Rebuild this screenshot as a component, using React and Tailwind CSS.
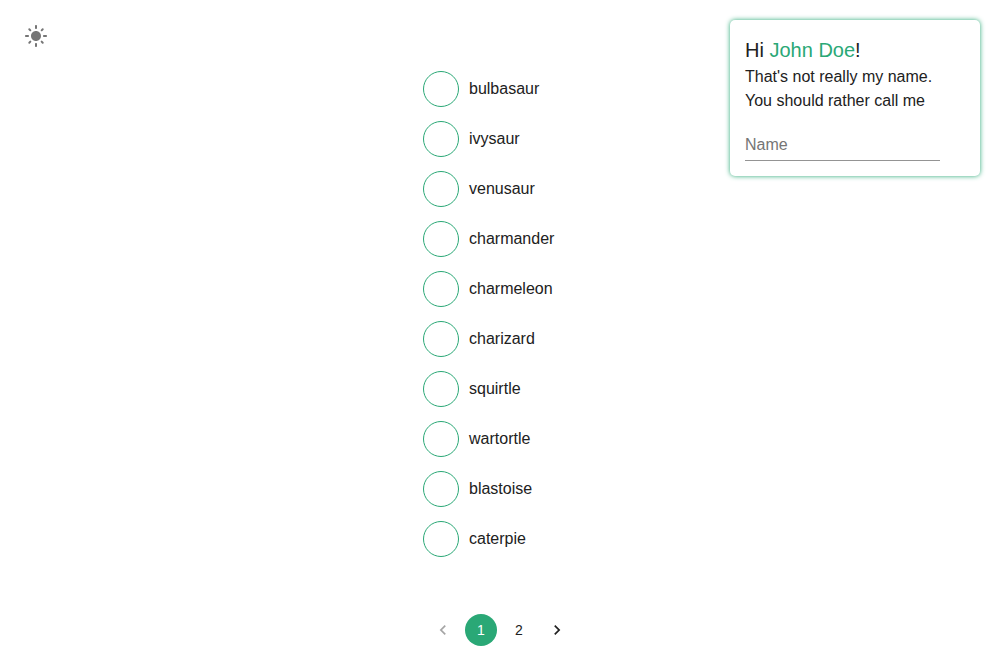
import { useState } from "react";
import { MdLightMode, MdNavigateBefore, MdNavigateNext } from "react-icons/md";

const pokemon = [
  "bulbasaur",
  "ivysaur",
  "venusaur",
  "charmander",
  "charmeleon",
  "charizard",
  "squirtle",
  "wartortle",
  "blastoise",
  "caterpie",
];

function PokemonList() {
  return (
    <ul className="flex flex-col">
      {pokemon.map((name) => (
        <li key={name}>
          <button type="button" className="flex h-[50px] items-center gap-[10px] text-left">
            <span className="size-9 rounded-full border border-[#2aa876]" />
            <span>{name}</span>
          </button>
        </li>
      ))}
    </ul>
  );
}

function Pagination() {
  const [page, setPage] = useState(1);
  const base = "flex size-8 items-center justify-center rounded-full text-sm disabled:opacity-40";
  return (
    <nav aria-label="Pagination" className="flex justify-center gap-[6px]">
      <button type="button" aria-label="Previous page" disabled={page === 1} onClick={() => setPage(1)} className={base}>
        <MdNavigateBefore size={20} />
      </button>
      <button type="button" onClick={() => setPage(1)} className={base + (page === 1 ? " bg-[#2aa876] text-white" : "")}>
        1
      </button>
      <button type="button" onClick={() => setPage(2)} className={base + (page === 2 ? " bg-[#2aa876] text-white" : "")}>
        2
      </button>
      <button type="button" aria-label="Next page" disabled={page === 2} onClick={() => setPage(2)} className={base}>
        <MdNavigateNext size={20} />
      </button>
    </nav>
  );
}

function Greeting() {
  const [name, setName] = useState("");
  return (
    <section className="w-[250px] rounded-[5px] px-[15px] pt-4 pb-[15px] shadow-[0_0_5px_#2aa876]">
      <h1 className="text-xl leading-[29px]">
        Hi <span className="text-[#2aa876]">{name || "John Doe"}</span>!
      </h1>
      <label htmlFor="name" className="block leading-6">
        That's not really my name.
        <br />
        You should rather call me
      </label>
      <input
        id="name"
        type="text"
        placeholder="Name"
        value={name}
        onChange={(e) => setName(e.target.value)}
        className="mt-4 block h-8 w-[195px] border-b border-[#949494] outline-none placeholder:text-[#757575]"
      />
    </section>
  );
}

export default function App() {
  return (
    <div className="bg-white font-['Liberation_Sans',Arial,sans-serif] text-base text-[#212121]">
      <div className="grid grid-cols-[1fr_154px_1fr] items-start">
        <header className="p-4">
          <button type="button" aria-label="Toggle theme" className="flex size-10 items-center justify-center text-[#757575]">
            <MdLightMode size={24} />
          </button>
        </header>
        <main className="pt-16">
          <PokemonList />
        </main>
        <aside className="justify-self-end p-5">
          <Greeting />
        </aside>
      </div>
      <footer className="pt-[50px] pb-[14px]">
        <Pagination />
      </footer>
    </div>
  );
}
